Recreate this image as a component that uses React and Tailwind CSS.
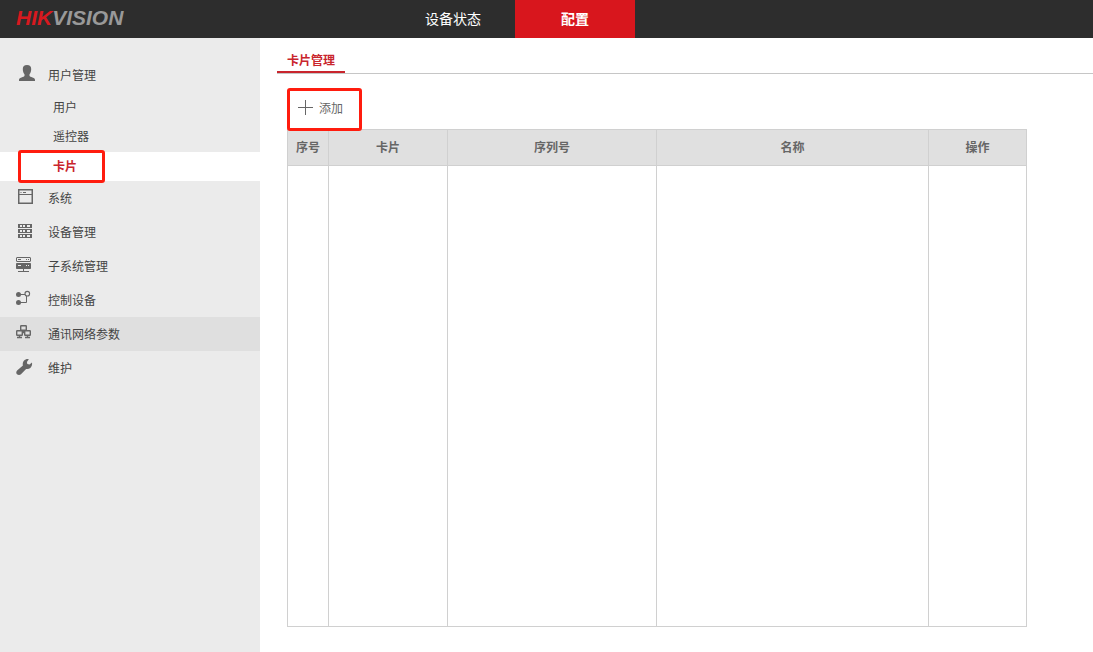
import { useState } from 'react';

const UserIcon = () => (
  <svg className="h-5 w-5 shrink-0 text-[#666]" viewBox="0 0 20 20" fill="currentColor" aria-hidden="true">
    <path d="M11 0c2.800 0 4.200 1.500 4.200 4.100 0 2.200-.6 4-1.700 5.200v1.800c.3.500 1.300.8 3 1.300 1.900.6 2.500 1.200 2.500 2.600v1H3v-1c0-1.400.6-2 2.500-2.600 1.700-.5 2.700-.8 3-1.300V9.300C7.400 8.100 6.800 6.300 6.800 4.100 6.800 1.500 8.200 0 11 0z" />
  </svg>
);

const WindowIcon = () => (
  <svg className="h-5 w-5 shrink-0 text-[#666]" viewBox="0 0 20 20" aria-hidden="true">
    <rect x="2.750" y="1.750" width="13.500" height="13.500" fill="none" stroke="currentColor" strokeWidth="1.500" />
    <path d="M3 6.500h13M4.500 4.500h1M7 4.500h3" fill="none" stroke="currentColor" />
  </svg>
);

const GridIcon = () => (
  <svg className="h-5 w-5 shrink-0 text-[#666]" viewBox="0 0 20 20" aria-hidden="true">
    <path d="M2 2h14v4H2zM2 7h14v4H2zM2 12h14v4H2z" fill="currentColor" />
    <path d="M4 4h2M7 4h2M11 4h3M4 9h2M7 9h2M11 9h3M4 14h2M7 14h2M11 14h3" stroke="#ebebeb" strokeWidth="2" />
  </svg>
);

const ServerIcon = () => (
  <svg className="h-5 w-5 shrink-0 text-[#666]" viewBox="0 0 20 20" aria-hidden="true">
    <rect x="0.500" y="1.500" width="14" height="4" rx="0.500" fill="none" stroke="currentColor" />
    <path d="M2 3.500h3M10 3.500h1M12 3.500h1" stroke="currentColor" />
    <rect y="7" width="15" height="6" rx="0.800" fill="currentColor" />
    <path d="M2 9.500h3M10 9.500h1M12 9.500h1" stroke="#ebebeb" />
    <path d="M7.500 13v2M2 15.500h11" stroke="currentColor" fill="none" />
  </svg>
);

const NodesIcon = () => (
  <svg className="h-5 w-5 shrink-0 text-[#666]" viewBox="0 0 20 20" aria-hidden="true">
    <circle cx="2.500" cy="4.500" r="2.500" fill="currentColor" />
    <circle cx="2.500" cy="12.500" r="2.500" fill="currentColor" />
    <circle cx="11.300" cy="3.700" r="2.300" fill="none" stroke="currentColor" strokeWidth="1.100" />
    <path d="M3 4.500h6M3 12.500h7.500V6" fill="none" stroke="currentColor" />
  </svg>
);

const NetworkIcon = () => (
  <svg className="h-5 w-5 shrink-0 text-[#666]" viewBox="0 0 20 20" aria-hidden="true">
    <g fill="none" stroke="currentColor" strokeWidth="1.400">
      <rect x="4.700" y="1.700" width="5.600" height="4.600" rx="0.500" />
      <rect x="0.700" y="6.700" width="5.600" height="4.600" rx="0.500" />
      <rect x="8.700" y="6.700" width="5.600" height="4.600" rx="0.500" />
      <path d="M7.500 6v2.500M6 8.500h3M3.500 11v2M11.500 11v2M1 13.500h5M9 13.500h5" />
    </g>
  </svg>
);

const WrenchIcon = () => (
  <svg className="h-5 w-5 shrink-0 text-[#666]" viewBox="0 0 20 20" fill="currentColor" aria-hidden="true">
    <path d="M12.800 1.200 10.900 4l.4 2 2.200.4L16 4.600c.4 2.200-.2 4.200-1.700 5.400-1.200 1-2.700 1.300-4.200.9L5 16.300c-1.100 1-2.900 1-4 0-1-1.100-1-2.900.1-3.900l5.800-5c-.4-1.600-.1-3.300 1-4.600 1.200-1.400 3.200-2 4.900-1.600z" />
  </svg>
);

const menu = [
  { label: '用户管理', Icon: UserIcon, children: ['用户', '遥控器', '卡片'] },
  { label: '系统', Icon: WindowIcon },
  { label: '设备管理', Icon: GridIcon },
  { label: '子系统管理', Icon: ServerIcon },
  { label: '控制设备', Icon: NodesIcon },
  { label: '通讯网络参数', Icon: NetworkIcon, hovered: true },
  { label: '维护', Icon: WrenchIcon },
];

const Header = () => (
  <header className="flex h-[38px] shrink-0 bg-[#2d2d2d] text-sm text-white">
    <div className="flex w-[393px] shrink-0 items-center pl-4">
      <a
        href="#home"
        className="pb-0.5 font-['Liberation_Sans',sans-serif] text-[21px] leading-5 font-bold text-[#999] italic"
      >
        <span className="text-[#d7191f]">HIK</span>VISION
      </a>
    </div>
    <nav className="flex gap-0.5">
      <a href="#status" className="flex w-[120px] items-center justify-center">设备状态</a>
      <a href="#config" className="flex w-[120px] items-center justify-center bg-[#d8161d] font-bold">配置</a>
    </nav>
  </header>
);

const Sidebar = ({ current, onSelect }) => (
  <aside className="w-[260px] shrink-0 bg-[#ebebeb] pt-5">
    <ul>
      {menu.map(({ label, Icon, children, hovered }) => (
        <li key={label}>
          <a
            href="#menu"
            className={`flex h-[34px] items-center gap-3 pl-4 hover:bg-[#dfdfdf] ${hovered ? 'bg-[#dfdfdf]' : ''}`}
          >
            <Icon />
            <span className="pt-0.5">{label}</span>
          </a>
          {children && (
            <ul className="pt-0.5">
              {children.map((child) => (
                <li key={child} className="relative">
                  <button
                    type="button"
                    onClick={() => onSelect(child)}
                    className={`block h-[29px] w-full pl-[53px] text-left ${
                      child === current ? 'bg-white font-bold text-[#c9252d]' : 'pb-0.5'
                    }`}
                  >
                    {child}
                  </button>
                  {child === current && (
                    <span className="pointer-events-none absolute -top-0.5 -bottom-0.5 left-[18px] w-[87px] rounded-[3px] border-3 border-[#ff1c0e]" />
                  )}
                </li>
              ))}
            </ul>
          )}
        </li>
      ))}
    </ul>
  </aside>
);

const CardTable = () => (
  <table className="-mt-0.5 w-full max-w-[740px] table-fixed border-collapse text-[#666]">
    <colgroup>
      <col className="w-[41px]" />
      <col className="w-[119px]" />
      <col className="w-[209px]" />
      <col />
      <col className="w-[98px]" />
    </colgroup>
    <thead>
      <tr className="h-9 bg-[#e0e0e0]">
        {['序号', '卡片', '序列号', '名称', '操作'].map((title) => (
          <th key={title} scope="col" className="border border-[#d0d0d0] font-bold">
            {title}
          </th>
        ))}
      </tr>
    </thead>
    <tbody>
      <tr className="h-[461px]">
        {[0, 1, 2, 3, 4].map((i) => (
          <td key={i} className="border border-[#d0d0d0]" />
        ))}
      </tr>
    </tbody>
  </table>
);

const App = () => {
  const [current, setCurrent] = useState('卡片');

  return (
    <div className="flex min-h-screen flex-col bg-white font-['Liberation_Sans','Noto_Sans_CJK_SC',sans-serif] text-xs text-[#444]">
      <Header />
      <div className="flex grow">
        <Sidebar current={current} onSelect={setCurrent} />
        <main className="min-w-0 grow pl-[17px]">
          <div className="flex h-9 items-end border-b border-[#c6c6c6]">
            <a
              href="#cards"
              className="border-b-2 border-[#c9252d] px-2.5 pb-0.5 font-bold text-[#c9252d]"
            >
              卡片管理
            </a>
          </div>
          <div className="pt-3.5 pr-2.5 pl-2.5">
            <button
              type="button"
              className="relative z-10 flex h-[43px] w-[75px] items-center gap-1.5 rounded-[3px] border-3 border-[#ff1c0e] pl-2 text-[#666]"
            >
              <svg className="mb-1 h-[15px] w-[15px] shrink-0" viewBox="0 0 15 15" aria-hidden="true">
                <path d="M7.500 0v15M0 7.500h15" fill="none" stroke="#666" />
              </svg>
              <span className="pb-0.5">添加</span>
            </button>
            <CardTable />
          </div>
        </main>
      </div>
    </div>
  );
};

export default App;
